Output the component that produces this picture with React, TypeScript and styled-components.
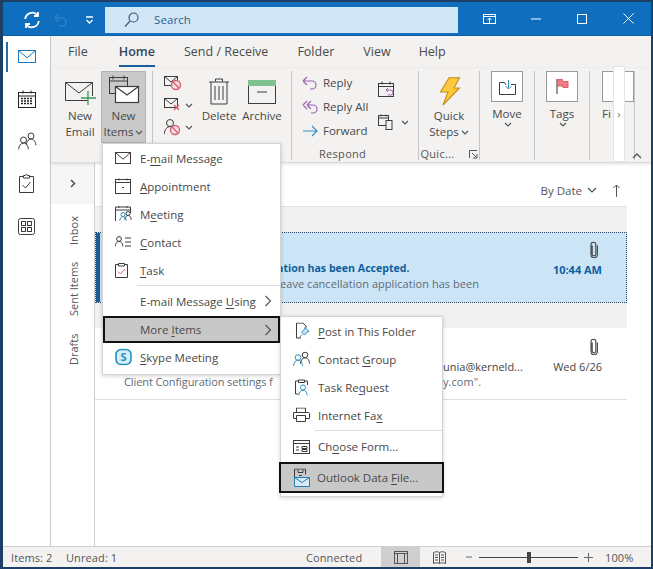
import React from "react";
import styled, { createGlobalStyle } from "styled-components";

const Global = createGlobalStyle`
  html, body { margin: 0; padding: 0; background: #fff; }
  * { box-sizing: border-box; }
  u { text-underline-offset: 2px; text-decoration-thickness: 1px; }
`;

const Window = styled.div`
  position: relative;
  width: 653px;
  height: 569px;
  overflow: hidden;
  display: flex;
  flex-direction: column;
  border: solid #1d3f66;
  border-width: 2px 2px 2px 3px;
  background: #fff;
  font-family: "Open Sans", "Noto Sans", sans-serif;
  font-size: 11.5px;
  color: #484848;
`;

const TitleBar = styled.header`
  flex: 0 0 34px;
  display: flex;
  align-items: center;
  background: #106ebe;
  border-bottom: 1px solid #0d5fa6;
`;
const QuickIcon = styled.span<{ $w: number; $down?: number }>`
  flex: 0 0 ${(p) => p.$w}px;
  display: flex;
  justify-content: center;
  align-items: center;
  padding-top: ${(p) => p.$down || 0}px;
`;
const SearchBox = styled.div`
  flex: 0 0 353px;
  height: 26px;
  margin: 2px 8px 0 0;
  display: flex;
  align-items: center;
  gap: 15px;
  padding-left: 19px;
  background: #d3e6f7;
  color: #2f5f8c;
  font-size: 11.5px;
  letter-spacing: 0.1px;
`;
const WinButton = styled.span`
  flex: 0 0 46.5px;
  display: flex;
  justify-content: center;
  align-items: center;
`;

const Body = styled.div`
  flex: 1;
  display: flex;
  min-height: 0;
`;
const NavRail = styled.nav`
  position: relative;
  flex: 0 0 48px;
  display: flex;
  flex-direction: column;
  align-items: center;
  padding: 8px 0 0 0;
  gap: 18.5px;
  background: #fff;
  border-right: 1px solid #c9c9c9;
`;
const NavActive = styled.span`
  position: absolute;
  left: 3px;
  top: 6px;
  width: 2px;
  height: 30px;
  background: #1f6fae;
`;
const NavIcon = styled.span`
  display: flex;
  width: 24px;
  height: 24px;
  justify-content: center;
  align-items: center;
`;

const Main = styled.div`
  flex: 1;
  min-width: 0;
  display: flex;
  flex-direction: column;
`;
const Tabs = styled.div`
  flex: 0 0 32px;
  display: flex;
  align-items: flex-start;
  padding: 7px 0 0 17px;
  gap: 28px;
  background: #f3f2f1;
  font-size: 12.5px;
  line-height: 18px;
`;
const Tab = styled.span<{ $active?: boolean; $after?: number }>`
  height: 24px;
  color: ${(p) => (p.$active ? "#33475b" : "#4a4a4a")};
  font-weight: ${(p) => (p.$active ? 600 : 400)};
  border-bottom: ${(p) => (p.$active ? "2px solid #1b5f9e" : "none")};
  margin-right: ${(p) => p.$after || 0}px;
`;

const Ribbon = styled.div`
  position: relative;
  flex: 0 0 95px;
  display: flex;
  background: #f3f2f1;
  border-bottom: 1px solid #dcdcdc;
  box-shadow: 0 1px 3px rgba(0, 0, 0, 0.12);
  z-index: 1;
  line-height: 16px;
`;
const Group = styled.section<{ $w: number }>`
  flex: 0 0 ${(p) => p.$w}px;
  display: flex;
  flex-direction: column;
  align-items: stretch;
  border-right: 1px solid #c6c6c6;
  margin: 3px 0 2px;
  position: relative;
`;
const GroupBody = styled.div`
  flex: 1;
  display: flex;
  align-items: flex-start;
  min-height: 0;
`;
const GroupLabel = styled.div<{ $align?: string }>`
  flex: 0 0 16px;
  margin-bottom: -2px;
  font-size: 11px;
  line-height: 16px;
  color: #555;
  letter-spacing: 0.3px;
  display: flex;
  justify-content: ${(p) => p.$align || "center"};
  gap: 14px;
  align-items: center;
`;
const BigButton = styled.div<{ $w: number; $active?: boolean; $inset?: number }>`
  flex: 0 0 ${(p) => p.$w}px;
  height: 72px;
  display: flex;
  flex-direction: column;
  align-items: center;
  text-align: center;
  padding: 4px 0 0 ${(p) => p.$inset || 0}px;
  background: ${(p) => (p.$active ? "#c9c9c9" : "transparent")};
  outline: ${(p) => (p.$active ? "1px solid #b5b5b5" : "none")};
  outline-offset: -1px;
`;
const BigIcon = styled.div<{ $raise?: number }>`
  height: 33px;
  display: flex;
  align-items: center;
  justify-content: center;
  padding-bottom: ${(p) => p.$raise || 0}px;
`;
const SmallCol = styled.div<{ $top?: number }>`
  flex: 0 0 auto;
  display: flex;
  flex-direction: column;
  padding-top: ${(p) => p.$top || 0}px;
`;
const SmallRow = styled.div<{ $h?: number; $gap?: number }>`
  height: ${(p) => p.$h || 24}px;
  display: flex;
  align-items: center;
  gap: ${(p) => p.$gap ?? 5}px;
  white-space: nowrap;
`;
const CalCol = styled.div`
  flex: 0 0 auto;
  display: flex;
  flex-direction: column;
  gap: 16px;
  padding-top: 10px;
`;
const CalRow = styled.div`
  display: flex;
  align-items: center;
  gap: 5px;
`;
const BoxButton = styled.div<{ $left?: number }>`
  flex: 1;
  display: flex;
  flex-direction: column;
  align-items: ${(p) => (p.$left ? "flex-start" : "center")};
  padding-left: ${(p) => p.$left || 0}px;
`;
const WhiteBox = styled.div`
  width: 32px;
  height: 31px;
  margin-top: 0;
  margin-bottom: 4px;
  background: #fff;
  border: 1px solid #9a9a9a;
  display: flex;
  align-items: center;
  justify-content: center;
`;
const Caret = styled.svg`
  display: inline-block;
  vertical-align: middle;
  margin-left: 2px;
`;
const Scroller = styled.div`
  position: absolute;
  left: 562px;
  top: -2px;
  width: 12px;
  height: 96px;
  background: #fff;
  border: 1px solid #e4e4e4;
  display: flex;
  align-items: flex-start;
  justify-content: center;
  padding-top: 40px;
  color: #777;
  font-size: 11px;
  line-height: 14px;
`;
const Collapse = styled.span`
  position: absolute;
  left: 581px;
  top: 85px;
`;

const Content = styled.div`
  flex: 1;
  display: flex;
  min-height: 0;
`;
const FolderPane = styled.aside`
  flex: 0 0 44px;
  display: flex;
  flex-direction: column;
  align-items: center;
  background: #fff;
  border-right: 1px solid #cfcfcf;
`;
const Expand = styled.div`
  flex: 0 0 41px;
  align-self: stretch;
  display: flex;
  align-items: center;
  justify-content: center;
  background: #f6f6f6;
  margin-bottom: 2px;
`;
const VerticalLabel = styled.span<{ $h: number }>`
  flex: 0 0 ${(p) => p.$h}px;
  writing-mode: vertical-rl;
  transform: rotate(180deg);
  text-align: center;
  font-size: 11px;
  line-height: 16px;
  color: #555;
  margin-left: 2px;
`;

const MessagePane = styled.div`
  flex: 0 0 532px;
  display: flex;
  flex-direction: column;
`;
const SortBar = styled.div`
  flex: 0 0 44px;
  display: flex;
  justify-content: flex-end;
  align-items: center;
  padding: 11px 7px 0 0;
  gap: 16px;
  color: #555;
  border-bottom: 1px solid #e4e4e4;
`;
const SortLabel = styled.span`
  display: flex;
  align-items: center;
  gap: 5px;
`;
const GroupBar = styled.div`
  flex: 0 0 25px;
  background: #f1f1f1;
`;
const MessageRow = styled.div<{ $selected?: boolean }>`
  position: relative;
  flex: 0 0 ${(p) => (p.$selected ? 71 : 72)}px;
  display: flex;
  background: ${(p) => (p.$selected ? "#cbe4f6" : "#fff")};
  border: ${(p) => (p.$selected ? "1px dotted #2d4f6c" : "none")};
  border-bottom: ${(p) => (p.$selected ? "1px dotted #2d4f6c" : "1px solid #dedede")};
`;
const RowAccent = styled.span`
  position: absolute;
  left: 0;
  top: 0;
  bottom: 0;
  width: 4px;
  background: #1c5c92;
`;
const RowText = styled.div<{ $pad: number; $top: number }>`
  flex: 1;
  min-width: 0;
  padding: ${(p) => p.$top}px 0 0 ${(p) => p.$pad}px;
  display: flex;
  flex-direction: column;
  white-space: nowrap;
`;
const Subject = styled.div<{ $unread?: boolean; $indent?: number }>`
  height: 15px;
  line-height: 15px;
  font-size: ${(p) => (p.$unread ? 10.6 : 11)}px;
  padding-left: ${(p) => p.$indent || 0}px;
  font-weight: ${(p) => (p.$unread ? 700 : 400)};
  color: ${(p) => (p.$unread ? "#0f5f9f" : "#444")};
`;
const Preview = styled.div<{ $indent?: number }>`
  height: 15px;
  line-height: 15px;
  font-size: 11px;
  color: #5f6b75;
  letter-spacing: 0.05px;
  display: flex;
  padding-left: ${(p) => p.$indent || 0}px;
`;
const PreviewStart = styled.span<{ $w: number }>`
  flex: 0 0 ${(p) => p.$w}px;
  letter-spacing: -0.1px;
`;
const RowMeta = styled.div<{ $top: number }>`
  flex: 0 0 auto;
  display: flex;
  flex-direction: column;
  align-items: flex-end;
  padding-top: ${(p) => p.$top}px;
`;
const Clip = styled.span`
  height: 21px;
  display: flex;
  width: 100%;
  justify-content: flex-end;
  padding-right: 3px;
`;
const RowTime = styled.span<{ $unread?: boolean }>`
  font-size: 11px;
  line-height: 15px;
  font-weight: ${(p) => (p.$unread ? 700 : 400)};
  color: ${(p) => (p.$unread ? "#0f5f9f" : "#444")};
`;
const Gap = styled.span<{ $w: number }>`
  flex: 0 0 ${(p) => p.$w}px;
`;

const StatusBar = styled.footer`
  flex: 0 0 21px;
  display: flex;
  align-items: center;
  padding-left: 8px;
  background: #f3f2f1;
  border-top: 1px solid #d0d0d0;
  font-size: 11px;
  color: #555;
  letter-spacing: 0.1px;
`;
const StatusText = styled.span<{ $w: number }>`
  flex: 0 0 ${(p) => p.$w}px;
  white-space: nowrap;
`;
const ViewButton = styled.span<{ $active?: boolean }>`
  flex: 0 0 39px;
  height: 20px;
  display: flex;
  align-items: center;
  justify-content: center;
  background: ${(p) => (p.$active ? "#cfcfcf" : "transparent")};
`;
const ZoomSlider = styled.span`
  position: relative;
  flex: 0 0 99px;
  height: 1px;
  background: #444;
  margin: 0 6px 0 7px;
`;
const ZoomThumb = styled.span`
  position: absolute;
  left: 48px;
  top: -5px;
  width: 4px;
  height: 11px;
  background: #444;
`;

const Menu = styled.div<{ $x: number; $y: number; $w: number }>`
  position: absolute;
  left: ${(p) => p.$x}px;
  top: ${(p) => p.$y}px;
  width: ${(p) => p.$w}px;
  background: #fff;
  border: 1px solid #d4d4d4;
  box-shadow: 0 1px 4px rgba(0, 0, 0, 0.18);
  padding-bottom: 3px;
  z-index: 5;
  color: #484848;
`;
const MenuItem = styled.div<{ $hot?: boolean; $indent: number; $h?: number; $bleed?: number; $top?: number }>`
  position: relative;
  height: ${(p) => p.$h || 28}px;
  display: flex;
  align-items: center;
  white-space: nowrap;
  padding-left: ${(p) => p.$indent}px;
  background: ${(p) => (p.$hot ? "#c8c8c8" : "transparent")};
  outline: ${(p) => (p.$hot ? "2px solid #111" : "none")};
  outline-offset: -2px;
  margin: ${(p) => p.$top || 0}px ${(p) => -(p.$bleed || 0)}px 0;
`;
const MenuLabel = styled.span``;
const MenuGlyph = styled.span<{ $left: number }>`
  position: absolute;
  left: ${(p) => p.$left}px;
  top: 50%;
  transform: translateY(-50%);
  display: flex;
`;
const MenuArrow = styled.span`
  position: absolute;
  right: 8px;
  top: 50%;
  transform: translateY(-50%);
  display: flex;
`;
const MenuSep = styled.div<{ $left: number }>`
  height: 1px;
  margin: 1px 0 1px ${(p) => p.$left}px;
  background: #dcdcdc;
`;

const S = "#3c3c3c";
const Ico = ({ w, h, children, sw = 1, c = S }: { w: number; h: number; children: React.ReactNode; sw?: number; c?: string }) => (
  <svg width={w} height={h} viewBox={`0 0 ${w} ${h}`} fill="none" stroke={c} strokeWidth={sw} style={{ display: "block" }}>
    {children}
  </svg>
);
const Chevron = () => (
  <Caret width="8" height="5" viewBox="0 0 8 5" fill="none" stroke="#555" strokeWidth="1.2">
    <path d="M1 1l3 3 3-3" />
  </Caret>
);
const Right = () => (
  <Ico w={8} h={12} c="#555" sw={1.2}>
    <path d="M1.5 1l5 5-5 5" />
  </Ico>
);
const Mail = ({ w = 19, h = 13, c = S }: { w?: number; h?: number; c?: string }) => (
  <Ico w={w} h={h} c={c}>
    <rect x=".5" y=".5" width={w - 1} height={h - 1} />
    <path d={`M.5 .5L${w / 2} ${h * 0.6}L${w - 0.5} .5`} />
  </Ico>
);
const Clipper = () => (
  <Ico w={10} h={17} sw={1.1} c="#444">
    <path d="M3.2 4v8.5a1.8 1.8 0 0 0 3.6 0V3a2.400 2.400 0 0 0-4.800 0v10a3.200 3.200 0 0 0 6.400 0V4" transform="translate(0 .6)" />
  </Ico>
);
const Person = ({ x, y, r, c = S }: { x: number; y: number; r: number; c?: string }) => (
  <g stroke={c}>
    <circle cx={x} cy={y} r={r} />
    <path d={`M${x - r * 1.6} ${y + r * 3.1}c0-${r * 1.3} ${r * 0.8}-${r * 2} ${r * 1.6}-${r * 2.1}s${r * 1.6} ${r * 0.8} ${r * 1.6} ${r * 2.1}`} />
  </g>
);
const NoSign = ({ x, y, r }: { x: number; y: number; r: number }) => (
  <g stroke="#d9606f" strokeWidth="1.4" fill="#f6e3e5">
    <circle cx={x} cy={y} r={r} />
    <path d={`M${x - r * 0.7} ${y - r * 0.7}L${x + r * 0.7} ${y + r * 0.7}`} />
  </g>
);

const App = () => (
  <Window>
    <Global />
    <TitleBar>
      <QuickIcon $w={16} />
      <QuickIcon $w={26} $down={3}>
        <Ico w={18} h={18} c="#fff" sw={1.8}>
          <path d="M2.200 8A7 7 0 0 1 14.500 4.200M15.800 10A7 7 0 0 1 3.500 13.800" />
          <path d="M15 1v4h-4M3 17v-4h4" />
        </Ico>
      </QuickIcon>
      <QuickIcon $w={30} $down={3}>
        <Ico w={15} h={15} c="#2f80c6" sw={1.5}>
          <path d="M2 5h7a4 4 0 0 1 0 8H6M2 5l3-3.500M2 5l3 3.500" />
        </Ico>
      </QuickIcon>
      <QuickIcon $w={28} $down={2}>
        <Ico w={9} h={8} c="#fff" sw={1.3}>
          <path d="M1 1h7M1.500 4l3 3 3-3" />
        </Ico>
      </QuickIcon>
      <QuickIcon $w={2} />
      <SearchBox>
        <Ico w={15} h={16} c="#345a7c" sw={1.2}>
          <circle cx="9.500" cy="5.500" r="4.500" />
          <path d="M6 9l-5 5.500" />
        </Ico>
        Search
      </SearchBox>
      <WinButton>
        <Ico w={13} h={10} c="#fff">
          <rect x=".5" y=".5" width="12" height="9" />
          <path d="M.5 2.500h12M6.500 9V4M4.500 6l2-2 2 2" />
        </Ico>
      </WinButton>
      <WinButton>
        <Ico w={10} h={2} c="#fff"><path d="M0 1h10" /></Ico>
      </WinButton>
      <WinButton>
        <Ico w={10} h={10} c="#fff"><rect x=".5" y=".5" width="9" height="9" /></Ico>
      </WinButton>
      <WinButton>
        <Ico w={11} h={11} c="#fff"><path d="M.5 .5l10 10M10.500 .5l-10 10" /></Ico>
      </WinButton>
    </TitleBar>

    <Body>
      <NavRail>
        <NavActive />
        <NavIcon><Mail w={18} h={13} c="#1c76b8" /></NavIcon>
        <NavIcon>
          <Ico w={18} h={18} c="#222">
            <rect x=".5" y="2.500" width="17" height="15" />
            <path d="M.5 6h17M5 .5v3M13 .5v3" />
            <path d="M3 8.500h12M3 11h12M3 13.500h12" strokeDasharray="2 1" strokeWidth="1.4" />
          </Ico>
        </NavIcon>
        <NavIcon>
          <Ico w={20} h={18}>
            <Person x={6.5} y={8} r={3} />
            <Person x={14} y={4} r={3} />
          </Ico>
        </NavIcon>
        <NavIcon>
          <Ico w={15} h={19}>
            <path d="M4.500 2.500H.5v16h14v-16h-4" />
            <path d="M4.500 4V1.500h2a1 1 0 0 1 2 0h2V4z" />
            <path d="M3.500 11l3 3 5-6" />
          </Ico>
        </NavIcon>
        <NavIcon>
          <Ico w={17} h={17}>
            <rect x=".5" y=".5" width="16" height="16" rx="2" />
            <rect x="3.500" y="3.500" width="4" height="4" />
            <rect x="9.500" y="3.500" width="4" height="4" />
            <rect x="3.500" y="9.500" width="4" height="4" />
            <rect x="9.500" y="9.500" width="4" height="4" />
          </Ico>
        </NavIcon>
      </NavRail>

      <Main>
        <Tabs>
          <Tab $after={3}>File</Tab>
          <Tab $active $after={1}>Home</Tab>
          <Tab $after={1}>Send / Receive</Tab>
          <Tab $after={1}>Folder</Tab>
          <Tab>View</Tab>
          <Tab>Help</Tab>
        </Tabs>

        <Ribbon>
          <Group $w={102}>
            <GroupBody>
              <BigButton $w={50} $inset={8}>
                <BigIcon>
                  <Ico w={32} h={28}>
                    <path d="M24 22.500H1.500v-18h27V18" />
                    <path d="M1.500 4.500L15 15 28.500 4.500" />
                    <path d="M24 13v14M17 20h15" stroke="#3d9b58" strokeWidth="1.3" />
                  </Ico>
                </BigIcon>
                New<br />Email
              </BigButton>
              <BigButton $w={45} $active>
                <BigIcon $raise={4}>
                  <Ico w={32} h={30}>
                    <rect x="1.500" y="2.500" width="18" height="16" />
                    <path d="M1.500 6h18M5 .5v4M16 .5v4" />
                    <rect x="7.500" y="11.500" width="23" height="16" fill="#fff" strokeWidth="1.2" />
                    <path d="M7.500 11.500L19 20l11.500-8.500" strokeWidth="1.2" />
                  </Ico>
                </BigIcon>
                New<br />
                <span>Items<Chevron /></span>
              </BigButton>
            </GroupBody>
            <GroupLabel $align="flex-start"><Gap $w={39} />Ne</GroupLabel>
          </Group>

          <Group $w={139}>
            <GroupBody>
              <Gap $w={10} />
              <SmallCol $top={1}>
                <SmallRow $h={22} $gap={0}>
                  <Ico w={20} h={20}>
                    <rect x="1.500" y="3.500" width="13" height="9" />
                    <path d="M1.500 3.500L8 9l6.500-5.500" />
                    <NoSign x={13} y={12} r={4.5} />
                  </Ico>
                </SmallRow>
                <SmallRow $h={22} $gap={0}>
                  <Ico w={20} h={20}>
                    <rect x="1.500" y="3.500" width="13" height="9" />
                    <path d="M1.500 3.500L8 9l6.500-5.500" />
                    <path d="M11 10l5 5M16 10l-5 5" stroke="#d9606f" strokeWidth="1.4" />
                  </Ico>
                  <Chevron />
                </SmallRow>
                <SmallRow $h={22} $gap={0}>
                  <Ico w={20} h={20}>
                    <Person x={7} y={6} r={3.5} />
                    <NoSign x={12} y={13} r={4.5} />
                  </Ico>
                  <Chevron />
                </SmallRow>
              </SmallCol>
              <Gap $w={5} />
              <BigButton $w={42}>
                <BigIcon>
                  <Ico w={22} h={27}>
                    <path d="M1 4h20M7.500 3.500V1h7v2.500M3 4v22h16V4M7 8v14M11 8v14M15 8v14" />
                  </Ico>
                </BigIcon>
                Delete
              </BigButton>
              <BigButton $w={44}>
                <BigIcon>
                  <Ico w={28} h={24}>
                    <rect x=".5" y="5" width="27" height="18.500" />
                    <rect x=".5" y=".5" width="27" height="5" fill="#7fc18f" stroke="#7fc18f" />
                    <path d="M9 12h10" />
                  </Ico>
                </BigIcon>
                Archive
              </BigButton>
            </GroupBody>
          </Group>

          <Group $w={127}>
            <GroupBody>
              <Gap $w={10} />
              <SmallCol>
                <SmallRow>
                  <Ico w={16} h={14} c="#9a5fb0" sw={1.1}>
                    <path d="M1 5h9a4 4 0 0 1 0 8H8M1 5l4-4M1 5l4 4" />
                  </Ico>
                  Reply
                </SmallRow>
                <SmallRow>
                  <Ico w={16} h={14} c="#9a5fb0" sw={1.1}>
                    <path d="M5 5h6a4 4 0 0 1 0 8H9M5 5l4-4M5 5l4 4M1 5l4-4M1 5l4 4" />
                  </Ico>
                  Reply All
                </SmallRow>
                <SmallRow>
                  <Ico w={16} h={12} c="#2a8fc5" sw={1.1}>
                    <path d="M1 6h14M10 1l5 5-5 5" />
                  </Ico>
                  Forward
                </SmallRow>
              </SmallCol>
              <Gap $w={10} />
              <CalCol>
                <CalRow>
                  <Ico w={17} h={17}>
                    <rect x=".5" y="2.500" width="15" height="13" />
                    <path d="M.5 5.500h15M4 .5v3M12 .5v3" />
                    <path d="M8 9h4.500a2.500 2.500 0 0 1 0 5H10M8 9l2-2M8 9l2 2" stroke="#9a5fb0" />
                  </Ico>
                </CalRow>
                <CalRow>
                  <Ico w={16} h={16}>
                    <rect x=".5" y="1.500" width="10" height="10" />
                    <path d="M.5 4h10M3 .5v2M8 .5v2" />
                    <rect x="8" y="6.500" width="6" height="9" fill="#f3f2f1" />
                  </Ico>
                  <Chevron />
                </CalRow>
              </CalCol>
            </GroupBody>
            <GroupLabel $align="flex-start"><Gap $w={13} />Respond</GroupLabel>
          </Group>

          <Group $w={60}>
            <GroupBody>
              <BigButton $w={60}>
                <BigIcon>
                  <Ico w={23} h={29} c="#c98f1a" sw={1.1}>
                    <path d="M11 .8h10.500L16 11h5.500L5 28l5-13H2.500z" fill="#ffc83d" />
                  </Ico>
                </BigIcon>
                Quick<br />
                <span>Steps<Chevron /></span>
              </BigButton>
            </GroupBody>
            <GroupLabel>
              Quic...
              <Ico w={9} h={9} c="#555">
                <path d="M.5 8V.5H8M3 3l4.500 4.500M4 8h4V4" />
              </Ico>
            </GroupLabel>
          </Group>

          <Group $w={55}>
            <BoxButton>
              <WhiteBox>
                <Ico w={17} h={16}>
                  <path d="M.5 3.500h5l1 2H7M12 5.500h4.500v10H.5v-12" />
                  <path d="M9.500 1v9M6.500 7l3 3 3-3" stroke="#3a8fb8" />
                </Ico>
              </WhiteBox>
              Move
              <Chevron />
            </BoxButton>
          </Group>

          <Group $w={55}>
            <BoxButton>
              <WhiteBox>
                <Ico w={13} h={17} c="#333">
                  <path d="M1 16V1" />
                  <path d="M1.500 1.500h5l.5 2h5v6h-5l-.5-1.500h-5z" fill="#ef7b85" stroke="#dd5f6a" />
                </Ico>
              </WhiteBox>
              Tags
              <Chevron />
            </BoxButton>
          </Group>

          <Group $w={35}>
            <BoxButton $left={12}>
              <WhiteBox>
                <Ico w={12} h={12}><path d="M9 10l3-4" /></Ico>
              </WhiteBox>
              Fi
            </BoxButton>
          </Group>

          <Scroller>›</Scroller>
          <Collapse>
            <Ico w={10} h={6} c="#555" sw={1.3}><path d="M1 5l4-4 4 4" /></Ico>
          </Collapse>
        </Ribbon>

        <Content>
          <FolderPane>
            <Expand>
              <Ico w={6} h={9} c="#555" sw={1.6}><path d="M1 1l3.500 3.500L1 8" /></Ico>
            </Expand>
            <VerticalLabel $h={50}>Inbox</VerticalLabel>
            <VerticalLabel $h={66}>Sent Items</VerticalLabel>
            <VerticalLabel $h={54}>Drafts</VerticalLabel>
          </FolderPane>
          <MessagePane>
            <SortBar>
              <SortLabel>
                By Date
                <Ico w={10} h={6} c="#555" sw={1.2}><path d="M1 1l4 4 4-4" /></Ico>
              </SortLabel>
              <Ico w={7} h={13} c="#555"><path d="M3.500 13V1M.5 4l3-3 3 3" /></Ico>
            </SortBar>
            <GroupBar />
            <MessageRow $selected>
              <RowAccent />
              <RowText $pad={181} $top={28}>
                <Subject $unread>ation has been Accepted.</Subject>
                <Preview $indent={3}>eave cancellation application has been</Preview>
              </RowText>
              <RowMeta $top={8}>
                <Clip><Clipper /></Clip>
                <RowTime $unread>10:44 AM</RowTime>
              </RowMeta>
              <Gap $w={24} />
            </MessageRow>
            <GroupBar />
            <MessageRow>
              <RowText $pad={29} $top={31}>
                <Subject $indent={319}>unia@kerneld...</Subject>
                <Preview>
                  <PreviewStart $w={319}>Client Configuration settings f</PreviewStart>
                  y.com".
                </Preview>
              </RowText>
              <RowMeta $top={10}>
                <Clip><Clipper /></Clip>
                <RowTime>Wed 6/26</RowTime>
              </RowMeta>
              <Gap $w={25} />
            </MessageRow>
          </MessagePane>
        </Content>
      </Main>
    </Body>

    <StatusBar>
      <StatusText $w={55}>Items: 2</StatusText>
      <StatusText $w={240}>Unread: 1</StatusText>
      <StatusText $w={75}>Connected</StatusText>
      <ViewButton $active>
        <Ico w={14} h={13} c="#555">
          <rect x=".5" y=".5" width="13" height="12" />
          <path d="M.5 2.500h13M3.500 2.500v10M10.500 2.500v10" />
        </Ico>
      </ViewButton>
      <ViewButton>
        <Ico w={13} h={13} c="#555">
          <path d="M6.500 1.500C5 .5 2.500.5.5 1.500v11c2-1 4.500-1 6 0 1.500-1 4-1 6 0v-11c-2-1-4.500-1-6 0zM6.500 1.500v11M2 4h3M2 6.500h3M2 9h3M8 4h3M8 6.500h3M8 9h3" />
        </Ico>
      </ViewButton>
      <Gap $w={7} />
      <Ico w={6} h={2} c="#666"><path d="M0 1h6" /></Ico>
      <ZoomSlider><ZoomThumb /></ZoomSlider>
      <Ico w={9} h={9} c="#666"><path d="M0 4.500h9M4.500 0v9" /></Ico>
      <Gap $w={12} />
      100%
    </StatusBar>

    <Menu $x={99} $y={141} $w={179}>
      <MenuItem $indent={37}>
        <MenuGlyph $left={12}><Mail w={16} h={12} /></MenuGlyph>
        <MenuLabel>E-<u>m</u>ail Message</MenuLabel>
      </MenuItem>
      <MenuItem $indent={37}>
        <MenuGlyph $left={12}>
          <Ico w={16} h={16}>
            <rect x=".5" y="1.500" width="15" height="14" />
            <path d="M.5 4.500h15M4 .5v2M12 .5v2" />
            <path d="M7 9.500h2" />
          </Ico>
        </MenuGlyph>
        <MenuLabel><u>A</u>ppointment</MenuLabel>
      </MenuItem>
      <MenuItem $indent={37}>
        <MenuGlyph $left={12}>
          <Ico w={17} h={17}>
            <path d="M.5 15.500V1.500h15v6M.5 4.500h15M4 .5v2M12 .5v2" />
            <Person x={8} y={9} r={2} c="#2a8fc5" />
            <Person x={13} y={8} r={2} />
          </Ico>
        </MenuGlyph>
        <MenuLabel>M<u>e</u>eting</MenuLabel>
      </MenuItem>
      <MenuItem $indent={37}>
        <MenuGlyph $left={12}>
          <Ico w={16} h={12}>
            <Person x={4} y={3} r={2.4} />
            <path d="M10 2h6M10 6h6M10 10h6" />
          </Ico>
        </MenuGlyph>
        <MenuLabel><u>C</u>ontact</MenuLabel>
      </MenuItem>
      <MenuItem $indent={37}>
        <MenuGlyph $left={12}>
          <Ico w={13} h={16}>
            <path d="M3.500 2.500H.5v13h12v-13h-3" />
            <path d="M3.500 4V1.500h6V4z" />
            <path d="M3 9.500l2.500 2.500 4.500-5" stroke="#d9606f" />
          </Ico>
        </MenuGlyph>
        <MenuLabel><u>T</u>ask</MenuLabel>
      </MenuItem>
      <MenuSep $left={34} />
      <MenuItem $indent={37}>
        <MenuLabel>E-mail Message <u>U</u>sing</MenuLabel>
        <MenuArrow><Right /></MenuArrow>
      </MenuItem>
      <MenuItem $indent={37} $hot $h={27} $top={1}>
        <MenuLabel>More <u>I</u>tems</MenuLabel>
        <MenuArrow><Right /></MenuArrow>
      </MenuItem>
      <MenuItem $indent={37}>
        <MenuGlyph $left={12}>
          <Ico w={17} h={17} c="#1f8fc4" sw={1.6}>
            <rect x="1" y="1" width="15" height="15" rx="5" fill="#d8eef8" />
            <text x="8.500" y="12.500" textAnchor="middle" fontSize="11" fontWeight="700" fill="#1f8fc4" stroke="none" fontFamily="Open Sans">S</text>
          </Ico>
        </MenuGlyph>
        <MenuLabel><u>S</u>kype Meeting</MenuLabel>
      </MenuItem>
    </Menu>

    <Menu $x={277} $y={314} $w={163}>
      <MenuItem $indent={37}>
        <MenuGlyph $left={12}>
          <Ico w={18} h={17}>
            <path d="M10 .5H3.500v15H8M10 .5l3 3V6" />
            <path d="M12 5l4 4-2 .5-2.500 3-3-3 3-2.500zM9 12l-3 3.500" stroke="#2a8fc5" fill="#cfe6f4" />
          </Ico>
        </MenuGlyph>
        <MenuLabel><u>P</u>ost in This Folder</MenuLabel>
      </MenuItem>
      <MenuItem $indent={37}>
        <MenuGlyph $left={12}>
          <Ico w={18} h={15}>
            <Person x={5} y={6} r={2.8} c="#2a8fc5" />
            <Person x={12} y={3.5} r={2.8} />
          </Ico>
        </MenuGlyph>
        <MenuLabel>Contact <u>G</u>roup</MenuLabel>
      </MenuItem>
      <MenuItem $indent={37}>
        <MenuGlyph $left={12}>
          <Ico w={17} h={17}>
            <path d="M5.500 2.500H2.500v13h3M11.500 2.500H14.500v4" />
            <path d="M5.500 4V1.500h6V4z" />
            <Person x={10} y={9} r={2.6} c="#2a8fc5" />
          </Ico>
        </MenuGlyph>
        <MenuLabel>Task Re<u>q</u>uest</MenuLabel>
      </MenuItem>
      <MenuItem $indent={37}>
        <MenuGlyph $left={12}>
          <Ico w={17} h={15}>
            <path d="M3.500 5V.5h9V5M3.500 11H.5V5h15a1 1 0 0 1 1 1v5h-4M3.500 8h9v6h-9z" />
          </Ico>
        </MenuGlyph>
        <MenuLabel>Internet Fa<u>x</u></MenuLabel>
      </MenuItem>
      <MenuSep $left={34} />
      <MenuItem $indent={37} $h={29}>
        <MenuGlyph $left={12}>
          <Ico w={17} h={14}>
            <rect x=".5" y=".5" width="16" height="13" />
            <path d="M.5 3.500h16M3 7h3M3 10h3M9 6.500h5v2H9zM9 9.500h5v2H9z" />
          </Ico>
        </MenuGlyph>
        <MenuLabel>Ch<u>o</u>ose Form...</MenuLabel>
      </MenuItem>
      <MenuItem $indent={38} $h={31} $top={1} $hot $bleed={2}>
        <MenuGlyph $left={15}>
          <Ico w={16} h={19}>
            <path d="M.5 10V.5h11V6M4 1v3h5V1M5 7h3" />
            <path d="M.5 9v9h15V9z" stroke="#1f7fb8" fill="#d8e9f5" />
            <path d="M.5 9l7.500 5 7.500-5" stroke="#1f7fb8" />
          </Ico>
        </MenuGlyph>
        <MenuLabel>Outlook Data <u>F</u>ile...</MenuLabel>
      </MenuItem>
    </Menu>
  </Window>
);

export default App;
